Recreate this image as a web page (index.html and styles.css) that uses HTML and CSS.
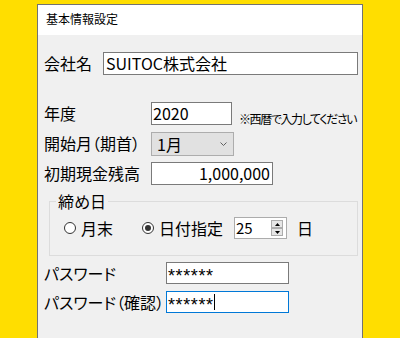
FILE: index.html
```html
<!DOCTYPE html>
<html lang="ja">
<head>
    <meta charset="UTF-8">
    <meta name="viewport" content="width=device-width, initial-scale=1.0">
    <title>基本情報設定</title>
    <link rel="stylesheet" href="styles.css">
</head>
<body>
    <div class="window">
        <div class="title-bar">基本情報設定</div>

        <div class="content">
            <div class="row row-company">
                <label class="label label-company">会社名</label>
                <div class="field field-company">SUITOC株式会社</div>
            </div>

            <div class="row row-year">
                <label class="label label-mid">年度</label>
                <div class="field field-year">2020</div>
                <span class="note">※西暦で入力してください</span>
            </div>

            <div class="row row-month">
                <label class="label label-mid">開始月（期首）</label>
                <div class="combo">
                    <span>1月</span>
                    <svg class="chevron" width="7" height="4" viewBox="0 0 7 4">
                        <path d="M0.5 0.5 L3.5 3.5 L6.5 0.5" fill="none" stroke="#606060" stroke-width="1"/>
                    </svg>
                </div>
            </div>

            <div class="row row-cash">
                <label class="label label-mid">初期現金残高</label>
                <div class="field field-cash">1,000,000</div>
            </div>

            <fieldset class="closing">
                <legend>締め日</legend>
                <div class="closing-row">
                    <span class="radio"></span>
                    <span class="radio-text">月末</span>
                    <span class="radio checked radio-second"></span>
                    <span class="radio-text">日付指定</span>
                    <div class="spinner">
                        <span class="spinner-value">25</span>
                        <div class="spinner-buttons">
                            <div class="spin-btn">
                                <svg width="5" height="3" viewBox="0 0 5 3"><path d="M2.5 0 L5 3 L0 3 Z" fill="#000"/></svg>
                            </div>
                            <div class="spin-btn">
                                <svg width="5" height="3" viewBox="0 0 5 3"><path d="M0 0 L5 0 L2.5 3 Z" fill="#000"/></svg>
                            </div>
                        </div>
                    </div>
                    <span class="day-unit">日</span>
                </div>
            </fieldset>

            <div class="row row-pw">
                <label class="label label-pw">パスワード</label>
                <div class="field field-pw"><span class="stars">******</span></div>
            </div>

            <div class="row row-pw2">
                <label class="label label-pw">パスワード（確認）</label>
                <div class="field field-pw focused"><span class="stars">******</span><span class="caret"></span></div>
            </div>
        </div>
    </div>
</body>
</html>
```

FILE: styles.css
```css
body {
    margin: 0;
    padding-top: 4px;
    height: 338px;
    box-sizing: border-box;
    overflow: hidden;
    background: #ffde00;
    font-family: "Noto Sans CJK JP", "Noto Sans", sans-serif;
    font-feature-settings: "palt";
    color: #000;
}
.window {
    margin-left: 37px;
    width: 326px;
    height: 334px;
    box-sizing: border-box;
    border: 1px solid #727272;
    border-bottom: none;
    background: #f0f0f0;
    overflow: hidden;
}
.title-bar {
    height: 30px;
    line-height: 28px;
    padding-left: 8px;
    background: #fff;
    font-size: 12px;
}
.content {
    padding: 17px 0 0 6px;
    display: flex;
    flex-direction: column;
}
.row {
    display: flex;
    align-items: center;
    height: 23px;
}
.row > * {
    flex-shrink: 0;
}
.row-year {
    margin-top: 27px;
}
.row-month,
.row-cash {
    margin-top: 7px;
}
.row-pw {
    margin-top: 6px;
    height: 22px;
}
.row-pw2 {
    margin-top: 7px;
    height: 22px;
}
.label {
    font-size: 16px;
    line-height: 23px;
    white-space: nowrap;
}
.label-company {
    width: 59px;
}
.label-mid {
    width: 107px;
}
.label-pw {
    width: 122px;
}
.field {
    height: 100%;
    box-sizing: border-box;
    border: 1px solid #7a7a7a;
    background: #fff;
    font-size: 16px;
    line-height: 21px;
    padding: 0 2px;
    white-space: nowrap;
    overflow: hidden;
}
.field-company {
    width: 255px;
}
.field-year {
    width: 81px;
    padding-left: 1px;
}
.field-cash {
    width: 122px;
    text-align: right;
    padding-right: 2px;
}
.note {
    margin-left: 7px;
    margin-top: 10px;
    font-size: 12px;
    letter-spacing: -1.4px;
    white-space: nowrap;
}
.combo {
    width: 83px;
    height: 24px;
    box-sizing: border-box;
    border: 1px solid #adadad;
    background: #e1e1e1;
    display: flex;
    align-items: center;
    justify-content: space-between;
    padding: 0 6px 0 5px;
    font-size: 16px;
}
.chevron {
    display: block;
}
.closing {
    margin: 6px 0 0 5px;
    width: 309px;
    box-sizing: border-box;
    min-width: 0;
    border: 1px solid #dcdcdc;
    padding: 6px 0 16px 6px;
}
.closing legend {
    font-size: 16px;
    line-height: 20px;
    padding: 0 2px;
}
.closing-row {
    display: flex;
    align-items: center;
    height: 22px;
    padding-left: 8px;
    font-size: 16px;
}
.radio {
    width: 12px;
    height: 12px;
    box-sizing: border-box;
    border: 1px solid #333;
    border-radius: 50%;
    background: #fff;
    display: flex;
    align-items: center;
    justify-content: center;
    flex-shrink: 0;
}
.radio.checked::after {
    content: "";
    width: 6px;
    height: 6px;
    border-radius: 50%;
    background: #333;
}
.radio-second {
    margin-left: 29px;
}
.radio-text {
    margin-left: 5px;
}
.spinner {
    margin-left: 11px;
    width: 53px;
    height: 22px;
    box-sizing: border-box;
    border: 1px solid #acacac;
    background: #fff;
    display: flex;
    align-items: center;
    justify-content: space-between;
    padding: 0 3px 0 1px;
}
.spinner-value {
    font-size: 15px;
    line-height: 20px;
}
.spinner-buttons {
    display: flex;
    flex-direction: column;
}
.spin-btn {
    width: 12px;
    height: 8px;
    box-sizing: border-box;
    border: 1px solid #acacac;
    background: #e6e6e6;
    display: flex;
    align-items: center;
    justify-content: center;
}
.spin-btn svg {
    display: block;
}
.day-unit {
    margin-left: 10px;
}
.field-pw {
    width: 123px;
    display: flex;
    align-items: center;
    padding-left: 1px;
}
.stars {
    font-family: "Liberation Sans", sans-serif;
    font-size: 18px;
    line-height: 14px;
    padding-top: 5px;
    letter-spacing: 0.6px;
}
.field-pw.focused {
    border-color: #0078d7;
}
.caret {
    width: 0;
    height: 16px;
    border-left: 1px solid #000;
}
```
